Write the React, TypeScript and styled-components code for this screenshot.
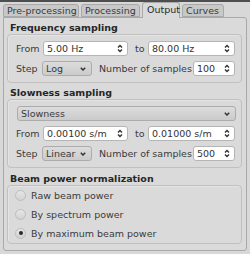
import React from "react";
import styled, { createGlobalStyle } from "styled-components";

const Global = createGlobalStyle`
  html, body { margin: 0; padding: 0; background: #d8d8d8; }
  body { font-family: "DejaVu Sans", sans-serif; font-size: 9.5px; color: #333; }
`;

const Window = styled.div`
  width: 250px;
  height: 254px;
  background: #d8d8d8;
  display: flex;
  flex-direction: column;
  overflow: hidden;
`;

const TopStrip = styled.div`
  height: 2px;
  background: #4e4e4e;
  flex: none;
`;

const TabBar = styled.div`
  display: flex;
  align-items: flex-end;
  gap: 2px;
  padding-left: 3px;
  height: 15px;
  flex: none;
  position: relative;
  z-index: 1;
`;

const Tab = styled.div<{ $active?: boolean; $w: number }>`
  width: ${(p) => p.$w}px;
  height: ${(p) => (p.$active ? "16px" : "13px")};
  box-sizing: border-box;
  padding-left: ${(p) => (p.$active ? "4px" : "3px")};
  padding-bottom: ${(p) => (p.$active ? "2px" : "0")};
  display: flex;
  align-items: center;
  border: 1px solid #a9a9a9;
  border-bottom: ${(p) => (p.$active ? "none" : "1px solid #a9a9a9")};
  border-radius: 3px 3px 0 0;
  background: ${(p) => (p.$active ? "#dadada" : "#c8c8c8")};
  color: ${(p) => (p.$active ? "#2a2a2a" : "#3a3a3a")};
  margin-bottom: ${(p) => (p.$active ? "-1px" : "0")};
  white-space: nowrap;
  flex: none;
`;

const Panel = styled.div`
  margin: 0 3px 3px 3px;
  flex: 1;
  border: 1px solid #a9a9a9;
  border-radius: 0 3px 3px 3px;
  background: #dadada;
  padding: 2px 4px 0 3px;
  display: flex;
  flex-direction: column;
`;

const GroupTitle = styled.div`
  font-weight: bold;
  color: #262626;
  height: 14px;
  line-height: 16px;
  padding-left: 3px;
  flex: none;
`;

const GroupFrame = styled.div<{ $pad?: string; $gap?: number; $mb?: number }>`
  border: 1px solid #c0c0c0;
  border-radius: 4px;
  box-shadow: inset 1px 1px 0 #e4e4e4;
  padding: ${(p) => p.$pad ?? "6px 5px 6px 8px"};
  display: flex;
  flex-direction: column;
  gap: ${(p) => p.$gap ?? 5}px;
  margin-bottom: ${(p) => p.$mb ?? 2}px;
  flex: none;
`;

const Row = styled.div`
  display: flex;
  align-items: center;
  height: 15px;
`;

const Label = styled.span<{ $w?: number; $ml?: number }>`
  width: ${(p) => (p.$w ? `${p.$w}px` : "auto")};
  margin-left: ${(p) => p.$ml ?? 0}px;
  color: #3a3a3a;
  white-space: nowrap;
  flex: none;
`;

const SpinBox = styled.div<{ $w: number }>`
  width: ${(p) => p.$w}px;
  height: 15px;
  box-sizing: border-box;
  background: #ffffff;
  border: 1px solid #b5b5b5;
  border-radius: 3px;
  display: flex;
  align-items: center;
  justify-content: space-between;
  padding: 0 4px 0 3px;
  color: #333;
  flex: none;
`;

const Combo = styled.div<{ $w?: number; $grow?: boolean }>`
  width: ${(p) => (p.$w ? `${p.$w}px` : "auto")};
  flex: ${(p) => (p.$grow ? 1 : "none")};
  margin-left: ${(p) => (p.$grow ? "1px" : "0")};
  height: 15px;
  box-sizing: border-box;
  background: linear-gradient(#dcdcdc, #cbcbcb);
  border: 1px solid #acacac;
  border-radius: 3px;
  display: flex;
  align-items: center;
  justify-content: space-between;
  padding: 0 5px 0 3px;
  color: #3a3a3a;
`;

const RadioRow = styled.div`
  display: flex;
  align-items: center;
  height: 14px;
  gap: 5px;
  color: #3a3a3a;
`;

const RadioCircle = styled.span<{ $checked?: boolean }>`
  width: 11px;
  height: 11px;
  box-sizing: border-box;
  border-radius: 50%;
  border: 1px solid #bdbdbd;
  background: linear-gradient(#e6e6e6, #d2d2d2);
  display: flex;
  align-items: center;
  justify-content: center;
  flex: none;
  &::after {
    content: "";
    display: ${(p) => (p.$checked ? "block" : "none")};
    width: 4px;
    height: 4px;
    border-radius: 50%;
    background: #2a2a2a;
  }
`;

const SpinArrows = () => (
  <svg width="6" height="9" viewBox="0 0 6 9">
    <path d="M1 3.5 L3 1.5 L5 3.5 M1 5.5 L3 7.5 L5 5.5" fill="none" stroke="#333" strokeWidth="1.4" />
  </svg>
);

const DropArrow = () => (
  <svg width="6" height="4" viewBox="0 0 6 4">
    <path d="M0.8 0.8 L3 3 L5.2 0.8" fill="none" stroke="#333" strokeWidth="1.5" />
  </svg>
);

const RangeRow = ({ from, to }: { from: string; to: string }) => (
  <Row>
    <Label $w={27}>From</Label>
    <SpinBox $w={85}>
      <span>{from}</span>
      <SpinArrows />
    </SpinBox>
    <Label $ml={7} $w={13}>to</Label>
    <SpinBox $w={87}>
      <span>{to}</span>
      <SpinArrows />
    </SpinBox>
  </Row>
);

const StepRow = ({ step, count }: { step: string; count: string }) => (
  <Row>
    <Label $w={26}>Step</Label>
    <Combo $w={50}>
      <span>{step}</span>
      <DropArrow />
    </Combo>
    <Label $ml={7} $w={94}>Number of samples</Label>
    <SpinBox $w={42}>
      <span>{count}</span>
      <SpinArrows />
    </SpinBox>
  </Row>
);

export default function App() {
  return (
    <Window>
      <Global />
      <TopStrip />
      <TabBar>
        <Tab $w={76}>Pre-processing</Tab>
        <Tab $w={59}>Processing</Tab>
        <Tab $w={38} $active>Output</Tab>
        <Tab $w={42}>Curves</Tab>
      </TabBar>
      <Panel>
        <GroupTitle>Frequency sampling</GroupTitle>
        <GroupFrame>
          <RangeRow from="5.00 Hz" to="80.00 Hz" />
          <StepRow step="Log" count="100" />
        </GroupFrame>
        <GroupTitle>Slowness sampling</GroupTitle>
        <GroupFrame $mb={3}>
          <Row>
            <Combo $grow>
              <span>Slowness</span>
              <DropArrow />
            </Combo>
          </Row>
          <RangeRow from="0.00100 s/m" to="0.01000 s/m" />
          <StepRow step="Linear" count="500" />
        </GroupFrame>
        <GroupTitle>Beam power normalization</GroupTitle>
        <GroupFrame $pad="2px 5px 3px 7px" $gap={5}>
          <RadioRow>
            <RadioCircle />
            Raw beam power
          </RadioRow>
          <RadioRow>
            <RadioCircle />
            By spectrum power
          </RadioRow>
          <RadioRow>
            <RadioCircle $checked />
            By maximum beam power
          </RadioRow>
        </GroupFrame>
      </Panel>
    </Window>
  );
}
